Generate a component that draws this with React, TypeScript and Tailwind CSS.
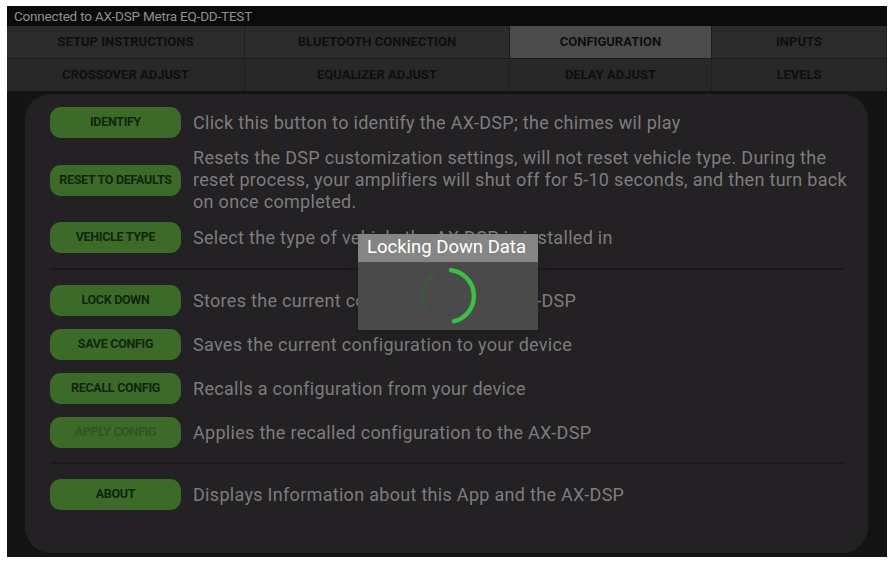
import { ReactNode } from 'react';

const tabsTop = ['Setup Instructions', 'Bluetooth Connection', 'Configuration', 'Inputs'];
const tabsBottom = ['Crossover Adjust', 'Equalizer Adjust', 'Delay Adjust', 'Levels'];
const tabWidths = ['w-[238px]', 'w-[265px]', 'w-[202px]', 'flex-1'];

type Row = { label: string; text: ReactNode; dim?: boolean };

const groupA: Row[] = [
  { label: 'Identify', text: 'Click this button to identify the AX-DSP; the chimes wil play' },
  {
    label: 'Reset to Defaults',
    text: 'Resets the DSP customization settings, will not reset vehicle type. During the reset process, your amplifiers will shut off for 5-10 seconds, and then turn back on once completed.',
  },
  { label: 'Vehicle Type', text: 'Select the type of vehicle the AX-DSP is installed in' },
];

const groupB: Row[] = [
  { label: 'Lock Down', text: 'Stores the current configuration to the AX-DSP' },
  { label: 'Save Config', text: 'Saves the current configuration to your device' },
  { label: 'Recall Config', text: 'Recalls a configuration from your device' },
  { label: 'Apply Config', text: 'Applies the recalled configuration to the AX-DSP', dim: true },
];

function ConfigRow({ row }: { row: Row }) {
  return (
    <div className="flex items-center gap-[12px]">
      <button
        className={
          'w-[131px] h-[31px] shrink-0 rounded-[11px] bg-[#3c6a29] text-[12.5px] font-bold uppercase tracking-[-0.3px] whitespace-nowrap ' +
          (row.dim ? 'text-[#2f5722]' : 'text-[#10260c]')
        }
      >
        {row.label}
      </button>
      <p className="text-[18px] leading-[22px] tracking-[0.3px] text-[#7e7c7e]">{row.text}</p>
    </div>
  );
}

function Spinner() {
  return (
    <svg width="64" height="64" viewBox="0 0 64 64">
      <circle cx="32" cy="32" r="26" fill="none" stroke="#2f6a2e" strokeWidth="3" strokeDasharray="40 200" transform="rotate(150 32 32)" opacity="0.6" />
      <path d="M35 6.2 A26 26 0 0 1 38 57.3" fill="none" stroke="#3cbf45" strokeWidth="4.5" strokeLinecap="round" />
    </svg>
  );
}

export default function App() {
  return (
    <div className="w-[890px] h-[562px] bg-white pl-[7px] pt-[6px] pr-[3px] pb-[5px] font-['Roboto','Liberation_Sans',sans-serif]">
      <div className="relative w-[880px] h-[551px] bg-[#151415] flex flex-col overflow-hidden">
        <div className="h-[20px] bg-[#0b0b0b] px-[7px] text-[13.5px] leading-[20px] tracking-[-0.2px] text-[#8f8f8f]">
          Connected to AX-DSP Metra EQ-DD-TEST
        </div>

        <div className="flex h-[33px] border-b border-[#1a1a1a]">
          {tabsTop.map((t, i) => (
            <div
              key={t}
              className={
                tabWidths[i] +
                ' flex items-center justify-center text-[13px] font-bold uppercase text-[#0e0e0e] border-r border-[#1e1e1e] ' +
                (i === 2 ? 'bg-[#4b4b4b]' : 'bg-[#2b2b2b]')
              }
            >
              {t}
            </div>
          ))}
        </div>
        <div className="flex h-[32px]">
          {tabsBottom.map((t, i) => (
            <div
              key={t}
              className={
                tabWidths[i] +
                ' flex items-center justify-center text-[13px] font-bold uppercase text-[#0e0e0e] border-r border-[#1e1e1e] bg-[#282828]'
              }
            >
              {t}
            </div>
          ))}
        </div>

        <div className="flex-1 pl-[18px] pr-[19px] pt-[3px] pb-[4px]">
          <div className="h-full rounded-[26px] bg-[#232123] pl-[25px] pr-[18px] pt-[13px] flex flex-col">
            <div className="flex flex-col gap-[9px]">
              {groupA.map((r) => (
                <ConfigRow key={r.label} row={r} />
              ))}
            </div>
            <div className="mt-[15px] mb-[15px] mr-[6px] h-[2px] bg-[#1a181a]" />
            <div className="flex flex-col gap-[13px]">
              {groupB.map((r) => (
                <ConfigRow key={r.label} row={r} />
              ))}
            </div>
            <div className="mt-[14px] mb-[15px] mr-[6px] h-[2px] bg-[#1a181a]" />
            <ConfigRow row={{ label: 'About', text: 'Displays Information about this App and the AX-DSP' }} />
          </div>
        </div>

        {/* progress dialog */}
        <div className="absolute left-[351px] top-[228px] w-[180px] h-[96px] bg-[#4a4a4a] flex flex-col shadow-lg">
          <div className="h-[28px] bg-[#858585] px-[9px] flex items-center text-[18.5px] text-white whitespace-nowrap">
            Locking Down Data
          </div>
          <div className="flex-1 flex items-center justify-center">
            <Spinner />
          </div>
        </div>
      </div>
    </div>
  );
}
